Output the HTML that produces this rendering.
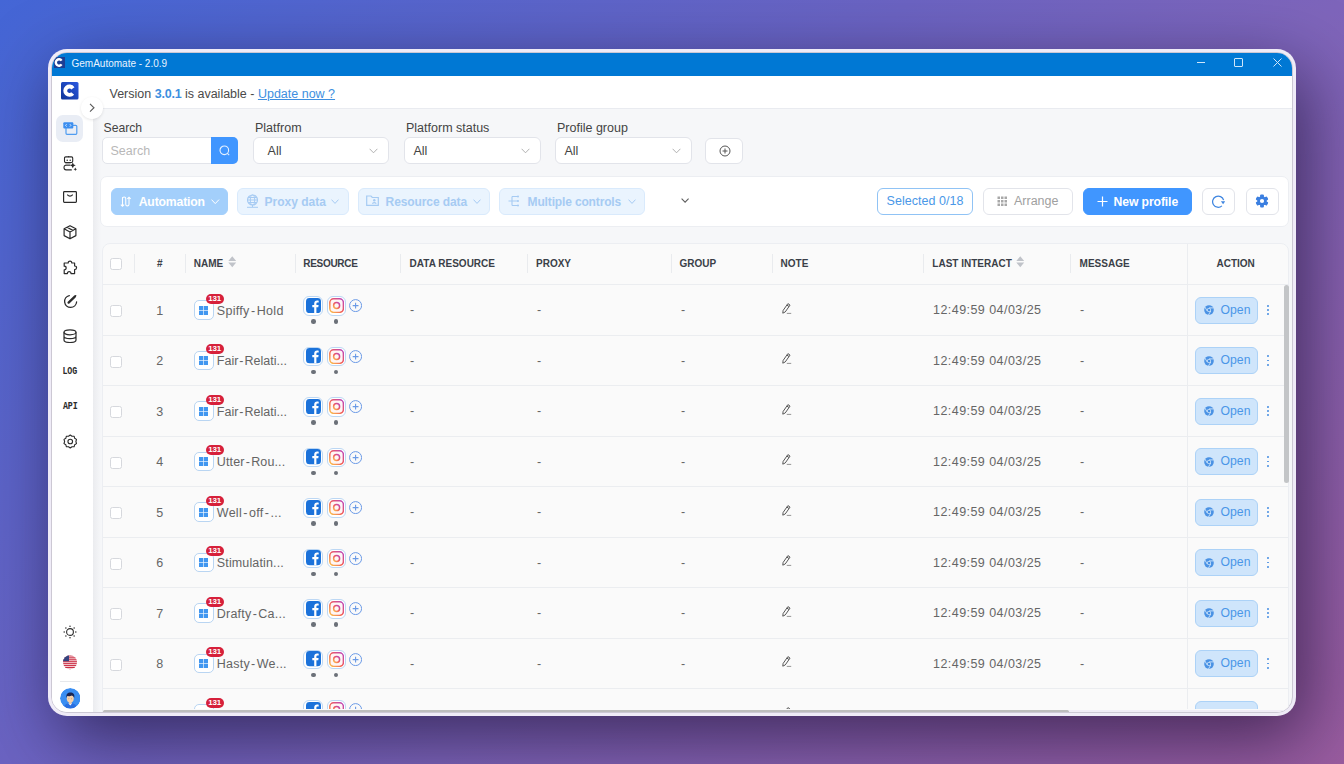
<!DOCTYPE html>
<html><head><meta charset="utf-8">
<style>
*{box-sizing:border-box;margin:0;padding:0}
html,body{width:1344px;height:764px;overflow:hidden}
body{font-family:"Liberation Sans",sans-serif;position:relative;
background:linear-gradient(140deg,#4466d6 0%,#6b63c2 40.4%,#7e65bb 59.6%,#9a5ca0 100%);}
.a{position:absolute}
.t{position:absolute;white-space:nowrap;line-height:1}
#win{position:absolute;left:48px;top:48.5px;width:1248px;height:667.5px;border-radius:19px;background:#efebf7;
box-shadow:10px 22px 70px 0 rgba(10,0,30,0.58)}
#inner{position:absolute;left:3px;top:3px;width:1242px;height:661.5px;border-radius:16px;border:1px solid #ccc8d4;overflow:hidden;background:#f6f7f9}
#pg{position:absolute;left:-52px;top:-52.5px;width:1344px;height:764px}
</style></head><body>
<div id="win"><div id="inner"><div id="pg">

<div class="a" style="left:51px;top:52px;width:1241.00px;height:23.50px;background:#0078d4"></div>
<svg class="a" style="left:54.2px;top:57.3px;" width="11" height="11" viewBox="0 0 11 11"><rect width="11" height="11" fill="#1d3e93"/><path d="M7.6 3.6 A3.2 3.2 0 1 0 7.6 7.4" fill="none" stroke="#fff" stroke-width="2.4"/></svg>
<div class="t" style="left:71.5px;top:58.63px;font-size:10px;color:#e8f3ff;font-weight:normal;">GemAutomate - 2.0.9</div>
<div class="a" style="left:1197px;top:62px;width:8.00px;height:1.00px;background:#cfe6fa"></div>
<div class="a" style="left:1234px;top:58px;width:9.00px;height:9.00px;border:1px solid #cfe6fa;border-radius:1px"></div>
<svg class="a" style="left:1273px;top:58px;" width="9" height="9" viewBox="0 0 9 9"><path d="M0.5 0.5 L8.5 8.5 M8.5 0.5 L0.5 8.5" stroke="#cfe6fa" stroke-width="1"/></svg>
<div class="a" style="left:51px;top:75.5px;width:42.00px;height:637.50px;background:#fff"></div>
<div class="a" style="left:93px;top:109px;width:8.00px;height:604.00px;background:linear-gradient(90deg,#ebecef,#f6f7f9)"></div>
<div class="a" style="left:93px;top:75.5px;width:1199.00px;height:33.50px;background:#fff;border-bottom:1px solid #e9ebf0"></div>
<div class="t" style="left:109.5px;top:87.82px;font-size:12.5px;color:#4a4a4a;font-weight:normal;">Version <span style="color:#3d8fe0;font-weight:bold;letter-spacing:-0.2px">3.0.1</span> is available - <span style="color:#3d8fe0;text-decoration:underline">Update now ?</span></div>
<div class="t" style="left:103.5px;top:121.87px;font-size:12.2px;color:#444;font-weight:normal;">Search</div>
<div class="t" style="left:255px;top:121.62px;font-size:12.5px;color:#444;font-weight:normal;">Platfrom</div>
<div class="t" style="left:406px;top:121.62px;font-size:12.5px;color:#444;font-weight:normal;">Platform status</div>
<div class="t" style="left:557px;top:121.62px;font-size:12.5px;color:#444;font-weight:normal;">Profile group</div>
<div class="a" style="left:101.5px;top:137.2px;width:136.50px;height:26.60px;background:#fff;border:1px solid #e2e4ea;border-radius:5px"></div>
<div class="a" style="left:211px;top:137.2px;width:27.00px;height:26.60px;background:#4096ff;border-radius:0 5px 5px 0"></div>
<svg class="a" style="left:218px;top:144px;" width="13" height="13" viewBox="0 0 13 13"><circle cx="6.3" cy="6.3" r="4.3" fill="none" stroke="#e6f1ff" stroke-width="1.1"/><path d="M9.4 9.4 L11.2 11.2" stroke="#e6f1ff" stroke-width="1.1"/></svg>
<div class="t" style="left:110.5px;top:144.72px;font-size:12.5px;color:#b8b8b8;font-weight:normal;">Search</div>
<div class="a" style="left:252.7px;top:137.2px;width:136.60px;height:26.60px;background:#fff;border:1px solid #e2e4ea;border-radius:6px"></div>
<div class="t" style="left:267.6px;top:144.72px;font-size:12.5px;color:#444;font-weight:normal;">All</div>
<svg class="a" style="left:369.3px;top:148px;" width="9" height="6" viewBox="0 0 9 6"><path d="M0.6 0.8 L4.5 4.8 L8.4 0.8" fill="none" stroke="#a8a8a8" stroke-width="0.9"/></svg>
<div class="a" style="left:403.8px;top:137.2px;width:136.90px;height:26.60px;background:#fff;border:1px solid #e2e4ea;border-radius:6px"></div>
<div class="t" style="left:413.4px;top:144.72px;font-size:12.5px;color:#444;font-weight:normal;">All</div>
<svg class="a" style="left:520.7px;top:148px;" width="9" height="6" viewBox="0 0 9 6"><path d="M0.6 0.8 L4.5 4.8 L8.4 0.8" fill="none" stroke="#a8a8a8" stroke-width="0.9"/></svg>
<div class="a" style="left:554.5px;top:137.2px;width:137.10px;height:26.60px;background:#fff;border:1px solid #e2e4ea;border-radius:6px"></div>
<div class="t" style="left:564.4px;top:144.72px;font-size:12.5px;color:#444;font-weight:normal;">All</div>
<svg class="a" style="left:671.6px;top:148px;" width="9" height="6" viewBox="0 0 9 6"><path d="M0.6 0.8 L4.5 4.8 L8.4 0.8" fill="none" stroke="#a8a8a8" stroke-width="0.9"/></svg>
<div class="a" style="left:705.4px;top:137.5px;width:38.00px;height:26.20px;background:#fff;border:1px solid #e2e4ea;border-radius:6px"></div>
<svg class="a" style="left:718.5px;top:145px;" width="12" height="12" viewBox="0 0 12 12"><circle cx="6" cy="6" r="5" fill="none" stroke="#555" stroke-width="1"/><path d="M6 3.5 V8.5 M3.5 6 H8.5" stroke="#555" stroke-width="1"/></svg>
<div class="a" style="left:100.4px;top:175.5px;width:1188.40px;height:51.40px;background:#fff;border:1px solid #eceef2;border-radius:7px"></div>
<div class="a" style="left:111px;top:187.8px;width:117.00px;height:26.90px;background:#a3cffb;border:1px solid #a3cffb;border-radius:6px;"></div>
<svg class="a" style="left:120px;top:195.8px" width="11.5" height="11" viewBox="0 0 13 13.5"><path d="M2.5 1.5 V12.5 M0.5 10.5 L2.5 12.5 L4.5 10.5" fill="none" stroke="#fff" stroke-width="1.3"/><path d="M2.5 3 C2.5 0.5 6.5 0.5 6.5 3 V10 C6.5 12.8 10.5 12.8 10.5 10 V1.5 M8.5 3.5 L10.5 1.5 L12.5 3.5" fill="none" stroke="#fff" stroke-width="1.3"/></svg>
<div class="t" style="left:138.7px;top:195.57px;font-size:12.2px;color:#fff;font-weight:bold;letter-spacing:-0.15px">Automation</div>
<svg class="a" style="left:211px;top:199px;" width="8.5" height="5.5" viewBox="0 0 8.5 5.5"><path d="M0.5 0.6 L4.25 4.6 L8 0.6" fill="none" stroke="#fff" stroke-width="1"/></svg>
<div class="a" style="left:237px;top:187.8px;width:111.50px;height:26.90px;background:#eaf4fe;border:1px solid #d9eafc;border-radius:6px;"></div>
<svg class="a" style="left:245.5px;top:194px;" width="13" height="14" viewBox="0 0 13 14"><circle cx="6.5" cy="6" r="5" fill="none" stroke="#a6cbf3" stroke-width="1.2"/><ellipse cx="6.5" cy="6" rx="2.2" ry="5" fill="none" stroke="#a6cbf3" stroke-width="1"/><path d="M1.5 6 H11.5 M2.3 3.5 H10.7 M2.3 8.5 H10.7 M6.5 11 V13 M1 13.3 H12" fill="none" stroke="#a6cbf3" stroke-width="1"/></svg>
<div class="t" style="left:264.5px;top:195.74px;font-size:12px;color:#a6cbf3;font-weight:bold;">Proxy data</div>
<svg class="a" style="left:331.4px;top:199px;" width="8" height="5.5" viewBox="0 0 8 5.5"><path d="M0.5 0.6 L4 4.4 L7.5 0.6" fill="none" stroke="#a6cbf3" stroke-width="1"/></svg>
<div class="a" style="left:357.5px;top:187.8px;width:132.50px;height:26.90px;background:#eaf4fe;border:1px solid #d9eafc;border-radius:6px;"></div>
<svg class="a" style="left:366px;top:195px;" width="13" height="11" viewBox="0 0 13 11"><path d="M0.7 1 H5 L6.3 2.5 H12.3 V10.3 H0.7 Z" fill="none" stroke="#a6cbf3" stroke-width="1.2"/><circle cx="8.3" cy="5.3" r="1.2" fill="#a6cbf3"/><path d="M6.3 8.6 Q8.3 6.6 10.3 8.6" fill="none" stroke="#a6cbf3" stroke-width="1.1"/></svg>
<div class="t" style="left:385.6px;top:195.74px;font-size:12px;color:#a6cbf3;font-weight:bold;letter-spacing:-0.1px">Resource data</div>
<svg class="a" style="left:473.4px;top:199px;" width="8" height="5.5" viewBox="0 0 8 5.5"><path d="M0.5 0.6 L4 4.4 L7.5 0.6" fill="none" stroke="#a6cbf3" stroke-width="1"/></svg>
<div class="a" style="left:499px;top:187.8px;width:145.80px;height:26.90px;background:#eaf4fe;border:1px solid #d9eafc;border-radius:6px;"></div>
<svg class="a" style="left:508px;top:195px;" width="11" height="12" viewBox="0 0 11 12"><path d="M0.5 6 H4 M4 1.5 H10 M4 6 H10 M4 10.5 H10 M4 1.5 V10.5" fill="none" stroke="#a6cbf3" stroke-width="1.1"/><circle cx="10" cy="1.5" r="1" fill="#a6cbf3"/><circle cx="10" cy="6" r="1" fill="#a6cbf3"/><circle cx="10" cy="10.5" r="1" fill="#a6cbf3"/></svg>
<div class="t" style="left:527.6px;top:195.74px;font-size:12px;color:#a6cbf3;font-weight:bold;letter-spacing:-0.15px">Multiple controls</div>
<svg class="a" style="left:627.6px;top:199px;" width="8" height="5.5" viewBox="0 0 8 5.5"><path d="M0.5 0.6 L4 4.4 L7.5 0.6" fill="none" stroke="#a6cbf3" stroke-width="1"/></svg>
<svg class="a" style="left:680.8px;top:198.2px;" width="8.2" height="5" viewBox="0 0 8.2 5"><path d="M0.6 0.6 L4.1 4.2 L7.6 0.6" fill="none" stroke="#5c5c5c" stroke-width="1.05"/></svg>
<div class="a" style="left:877px;top:187.8px;width:96.00px;height:26.90px;background:#fff;border:1px solid #90c3f5;border-radius:6px;"></div>
<div class="t" style="left:886.5px;top:195.32px;font-size:12.5px;color:#4a98e8;font-weight:normal;letter-spacing:0.05px">Selected 0/18</div>
<div class="a" style="left:983.4px;top:187.8px;width:89.40px;height:26.90px;background:#fff;border:1px solid #e2e4ea;border-radius:6px;"></div>
<svg class="a" style="left:997px;top:195.5px;" width="11" height="11" viewBox="0 0 11 11"><rect x="0.5" y="0.5" width="2.5" height="2.5" fill="#a8a8a8"/><rect x="0.5" y="4.0" width="2.5" height="2.5" fill="#a8a8a8"/><rect x="0.5" y="7.5" width="2.5" height="2.5" fill="#a8a8a8"/><rect x="4.0" y="0.5" width="2.5" height="2.5" fill="#a8a8a8"/><rect x="4.0" y="4.0" width="2.5" height="2.5" fill="#a8a8a8"/><rect x="4.0" y="7.5" width="2.5" height="2.5" fill="#a8a8a8"/><rect x="7.5" y="0.5" width="2.5" height="2.5" fill="#a8a8a8"/><rect x="7.5" y="4.0" width="2.5" height="2.5" fill="#a8a8a8"/><rect x="7.5" y="7.5" width="2.5" height="2.5" fill="#a8a8a8"/></svg>
<div class="t" style="left:1014px;top:195.32px;font-size:12.5px;color:#a0a0a0;font-weight:normal;">Arrange</div>
<div class="a" style="left:1083px;top:187.8px;width:108.60px;height:26.90px;background:#4096ff;border:1px solid #4096ff;border-radius:6px;"></div>
<svg class="a" style="left:1097px;top:195.5px;" width="11" height="11" viewBox="0 0 11 11"><path d="M5.5 0.5 V10.5 M0.5 5.5 H10.5" stroke="#fff" stroke-width="1.2"/></svg>
<div class="t" style="left:1113.5px;top:195.57px;font-size:12.2px;color:#fff;font-weight:bold;letter-spacing:-0.1px">New profile</div>
<div class="a" style="left:1202px;top:187.8px;width:33.40px;height:26.90px;background:#fff;border:1px solid #e2e4ea;border-radius:6px;"></div>
<svg class="a" style="left:1211px;top:194.5px;" width="15" height="14" viewBox="0 0 15 14"><path d="M10.9 10.9 A5.6 5.6 0 1 1 12.6 5.2" fill="none" stroke="#3f86e0" stroke-width="1.25"/><path d="M9.9 6.2 L14.2 6.2 L12.1 9.3 Z" fill="#3f86e0"/></svg>
<div class="a" style="left:1245.6px;top:187.8px;width:33.40px;height:26.90px;background:#fff;border:1px solid #e2e4ea;border-radius:6px;"></div>
<svg class="a" style="left:1255.4px;top:194.3px;" width="14" height="14" viewBox="0 0 14 14"><g fill="#3b7fe0"><circle cx="7" cy="7" r="4.7"/><rect x="5.1" y="0.6" width="3.8" height="3.6" rx="1" transform="rotate(0 7 7)"/><rect x="5.1" y="0.6" width="3.8" height="3.6" rx="1" transform="rotate(60 7 7)"/><rect x="5.1" y="0.6" width="3.8" height="3.6" rx="1" transform="rotate(120 7 7)"/><rect x="5.1" y="0.6" width="3.8" height="3.6" rx="1" transform="rotate(180 7 7)"/><rect x="5.1" y="0.6" width="3.8" height="3.6" rx="1" transform="rotate(240 7 7)"/><rect x="5.1" y="0.6" width="3.8" height="3.6" rx="1" transform="rotate(300 7 7)"/></g><circle cx="7" cy="7" r="2.1" fill="#fff"/></svg>
<div class="a" style="left:101.7px;top:243.4px;width:1187.30px;height:496.60px;background:#fafafa;border:1px solid #eceef2;border-radius:8px 8px 0 0"></div>
<div class="a" style="left:102.7px;top:284.0px;width:1185.30px;height:1.00px;background:#ebedf0"></div>
<div class="a" style="left:134.3px;top:254px;width:1.00px;height:19.00px;background:#e9ebee"></div>
<div class="a" style="left:184.5px;top:254px;width:1.00px;height:19.00px;background:#e9ebee"></div>
<div class="a" style="left:294.6px;top:254px;width:1.00px;height:19.00px;background:#e9ebee"></div>
<div class="a" style="left:400.4px;top:254px;width:1.00px;height:19.00px;background:#e9ebee"></div>
<div class="a" style="left:526.9px;top:254px;width:1.00px;height:19.00px;background:#e9ebee"></div>
<div class="a" style="left:670.6px;top:254px;width:1.00px;height:19.00px;background:#e9ebee"></div>
<div class="a" style="left:771.7px;top:254px;width:1.00px;height:19.00px;background:#e9ebee"></div>
<div class="a" style="left:923.3px;top:254px;width:1.00px;height:19.00px;background:#e9ebee"></div>
<div class="a" style="left:1070.4px;top:254px;width:1.00px;height:19.00px;background:#e9ebee"></div>
<div class="a" style="left:1187px;top:244.4px;width:1.00px;height:465.10px;background:#ebedf0"></div>
<div class="a" style="left:110px;top:258px;width:12.00px;height:12.00px;background:#fff;border:1px solid #d6d8dd;border-radius:2.5px"></div>
<div class="t" style="left:157px;top:259.14px;font-size:10px;color:#3a3f48;font-weight:bold;">#</div>
<div class="t" style="left:193.8px;top:259.14px;font-size:10px;color:#3a3f48;font-weight:bold;">NAME</div>
<svg class="a" style="left:228px;top:256px;" width="8.5" height="11.5" viewBox="0 0 8.5 11.5"><path d="M0.3 4.9 L4.25 0.3 L8.2 4.9 Z M0.3 6.6 L4.25 11.2 L8.2 6.6 Z" fill="#c0c3c9"/></svg>
<div class="t" style="left:303.3px;top:259.14px;font-size:10px;color:#3a3f48;font-weight:bold;letter-spacing:-0.3px">RESOURCE</div>
<div class="t" style="left:409.6px;top:259.14px;font-size:10px;color:#3a3f48;font-weight:bold;">DATA RESOURCE</div>
<div class="t" style="left:536px;top:259.14px;font-size:10px;color:#3a3f48;font-weight:bold;">PROXY</div>
<div class="t" style="left:679.6px;top:259.14px;font-size:10px;color:#3a3f48;font-weight:bold;">GROUP</div>
<div class="t" style="left:780.6px;top:259.14px;font-size:10px;color:#3a3f48;font-weight:bold;">NOTE</div>
<div class="t" style="left:932.3px;top:258.54px;font-size:10px;color:#3a3f48;font-weight:bold;">LAST INTERACT</div>
<svg class="a" style="left:1016px;top:256px;" width="8.5" height="11.5" viewBox="0 0 8.5 11.5"><path d="M0.3 4.9 L4.25 0.3 L8.2 4.9 Z M0.3 6.6 L4.25 11.2 L8.2 6.6 Z" fill="#c0c3c9"/></svg>
<div class="t" style="left:1079.6px;top:259.04px;font-size:10px;color:#3a3f48;font-weight:bold;">MESSAGE</div>
<div class="t" style="left:1216.5px;top:259.04px;font-size:10px;color:#3a3f48;font-weight:bold;">ACTION</div>
<div class="a" style="left:0;top:0;width:1344px;height:709px;overflow:hidden">
<div class="a" style="left:102.7px;top:334.5px;width:1185.30px;height:1.00px;background:#ebedf0"></div>
<div class="a" style="left:110px;top:305.1px;width:12.00px;height:12.00px;background:#fff;border:1px solid #d6d8dd;border-radius:2.5px"></div>
<div class="t" style="left:-40.19999999999999px;width:400px;text-align:center;top:304.72px;font-size:12.5px;color:#666;font-weight:normal;">1</div>
<div class="a" style="left:194px;top:300.2px;width:19.60px;height:19.50px;background:#fff;border:1px solid #b9d5f2;border-radius:5px"></div>
<svg class="a" style="left:199.2px;top:305.8px;" width="9" height="9" viewBox="0 0 9 9"><g fill="#4197f0"><rect x="0" y="0" width="4.2" height="4.2"/><rect x="4.8" y="0" width="4.2" height="4.2"/><rect x="0" y="4.8" width="4.2" height="4.2"/><rect x="4.8" y="4.8" width="4.2" height="4.2"/></g></svg>
<div class="a" style="left:205.6px;top:293.9px;width:18.20px;height:10.00px;background:#d6203a;border-radius:5px"></div>
<div class="t" style="left:14.699999999999989px;width:400px;text-align:center;top:294.93px;font-size:8px;color:#fff;font-weight:bold;letter-spacing:-0.2px">131</div>
<div class="t" style="left:216.8px;top:304.72px;font-size:12.5px;color:#646464;font-weight:normal;letter-spacing:0.3px">Spiffy&#8202;-&#8202;Hold</div>
<div class="a" style="left:303.4px;top:296.2px;width:19.20px;height:19.40px;background:#fff;border:1.2px solid #bcd7f4;border-radius:6px"></div>
<svg class="a" style="left:306px;top:297.9px;" width="15" height="15.2" viewBox="0 0 15 15.2"><rect width="15" height="15.2" rx="3.5" fill="#1b72da"/><path d="M10.4 15.2 V9.3 H12.3 L12.6 7.1 H10.4 V5.8 C10.4 5.1 10.7 4.6 11.7 4.6 H12.7 V2.7 C12.4 2.65 11.8 2.6 11.1 2.6 C9.4 2.6 8.2 3.6 8.2 5.5 V7.1 H6.3 V9.3 H8.2 V15.2 Z" fill="#fff"/></svg>
<div class="a" style="left:326.5px;top:296.2px;width:19.40px;height:19.40px;background:#fff;border:1.2px solid #bcd7f4;border-radius:6px"></div>
<svg class="a" style="left:328.6px;top:298.0px;" width="15.2" height="15.2" viewBox="0 0 15.2 15.2"><defs><linearGradient id="ig0" x1="0" y1="1" x2="1" y2="0"><stop offset="0" stop-color="#fbc64e"/><stop offset="0.5" stop-color="#f05a5a"/><stop offset="1" stop-color="#b845c0"/></linearGradient></defs><rect x="0.8" y="0.8" width="13.6" height="13.6" rx="3.8" fill="#fff6f6" stroke="url(#ig0)" stroke-width="1.5"/><circle cx="7.6" cy="7.6" r="3" fill="none" stroke="url(#ig0)" stroke-width="1.5"/></svg>
<svg class="a" style="left:349px;top:299.1px;" width="13.2" height="13.2" viewBox="0 0 13.2 13.2"><circle cx="6.6" cy="6.6" r="6" fill="none" stroke="#6a9ae6" stroke-width="1"/><path d="M6.6 3.7 V9.5 M3.7 6.6 H9.5" stroke="#6a9ae6" stroke-width="1.1"/></svg>
<div class="a" style="left:311.1px;top:319.4px;width:4.60px;height:4.60px;background:#6b7078;border-radius:50%"></div>
<div class="a" style="left:333.8px;top:319.4px;width:4.60px;height:4.60px;background:#6b7078;border-radius:50%"></div>
<div class="t" style="left:410px;top:304.42px;font-size:12.5px;color:#666;font-weight:normal;">-</div>
<div class="t" style="left:537px;top:304.42px;font-size:12.5px;color:#666;font-weight:normal;">-</div>
<div class="t" style="left:681px;top:304.42px;font-size:12.5px;color:#666;font-weight:normal;">-</div>
<div class="t" style="left:1080px;top:304.42px;font-size:12.5px;color:#666;font-weight:normal;">-</div>
<svg class="a" style="left:781px;top:302.5px;" width="11" height="12" viewBox="0 0 11 12"><g transform="translate(5 5.6) rotate(35)" fill="none" stroke="#555" stroke-width="0.9" stroke-linejoin="round"><path d="M-1.3 -5.2 H1.3 V3.2 L0 5.6 L-1.3 3.2 Z M-1.3 -3.4 H1.3"/></g><path d="M5.8 10.4 H10.2" stroke="#8a8a8a" stroke-width="0.9"/></svg>
<div class="t" style="left:933px;top:304.22px;font-size:12.5px;color:#666;font-weight:normal;letter-spacing:0.45px">12:49:59 04/03/25</div>
<div class="a" style="left:1195.2px;top:296.5px;width:62.60px;height:27.00px;background:#cfe5fb;border:1px solid #acd2f7;border-radius:6px"></div>
<svg class="a" style="left:1203.6px;top:305.1px;" width="10" height="10" viewBox="0 0 10 10"><circle cx="5" cy="5" r="4.8" fill="#4a92e4"/><circle cx="5" cy="5" r="2.1" fill="#cfe5fb"/><circle cx="5" cy="5" r="1.3" fill="#4a92e4"/><path d="M5 2.9 H9.6 M3.2 6 L0.9 2 M6.8 6 L4.5 9.8" stroke="#cfe5fb" stroke-width="0.9"/></svg>
<div class="t" style="left:1220.6px;top:303.77px;font-size:12.2px;color:#4a96e8;font-weight:normal;">Open</div>
<div class="a" style="left:1267.2px;top:304.90000000000003px;width:1.80px;height:1.80px;background:#4a90e2;border-radius:50%"></div>
<div class="a" style="left:1267.2px;top:309.1px;width:1.80px;height:1.80px;background:#4a90e2;border-radius:50%"></div>
<div class="a" style="left:1267.2px;top:313.40000000000003px;width:1.80px;height:1.80px;background:#4a90e2;border-radius:50%"></div>
<div class="a" style="left:102.7px;top:385.0px;width:1185.30px;height:1.00px;background:#ebedf0"></div>
<div class="a" style="left:110px;top:355.6px;width:12.00px;height:12.00px;background:#fff;border:1px solid #d6d8dd;border-radius:2.5px"></div>
<div class="t" style="left:-40.19999999999999px;width:400px;text-align:center;top:355.22px;font-size:12.5px;color:#666;font-weight:normal;">2</div>
<div class="a" style="left:194px;top:350.7px;width:19.60px;height:19.50px;background:#fff;border:1px solid #b9d5f2;border-radius:5px"></div>
<svg class="a" style="left:199.2px;top:356.3px;" width="9" height="9" viewBox="0 0 9 9"><g fill="#4197f0"><rect x="0" y="0" width="4.2" height="4.2"/><rect x="4.8" y="0" width="4.2" height="4.2"/><rect x="0" y="4.8" width="4.2" height="4.2"/><rect x="4.8" y="4.8" width="4.2" height="4.2"/></g></svg>
<div class="a" style="left:205.6px;top:344.4px;width:18.20px;height:10.00px;background:#d6203a;border-radius:5px"></div>
<div class="t" style="left:14.699999999999989px;width:400px;text-align:center;top:345.43px;font-size:8px;color:#fff;font-weight:bold;letter-spacing:-0.2px">131</div>
<div class="t" style="left:216.8px;top:355.22px;font-size:12.5px;color:#646464;font-weight:normal;letter-spacing:0.0px">Fair&#8202;-&#8202;Relati...</div>
<div class="a" style="left:303.4px;top:346.7px;width:19.20px;height:19.40px;background:#fff;border:1.2px solid #bcd7f4;border-radius:6px"></div>
<svg class="a" style="left:306px;top:348.4px;" width="15" height="15.2" viewBox="0 0 15 15.2"><rect width="15" height="15.2" rx="3.5" fill="#1b72da"/><path d="M10.4 15.2 V9.3 H12.3 L12.6 7.1 H10.4 V5.8 C10.4 5.1 10.7 4.6 11.7 4.6 H12.7 V2.7 C12.4 2.65 11.8 2.6 11.1 2.6 C9.4 2.6 8.2 3.6 8.2 5.5 V7.1 H6.3 V9.3 H8.2 V15.2 Z" fill="#fff"/></svg>
<div class="a" style="left:326.5px;top:346.7px;width:19.40px;height:19.40px;background:#fff;border:1.2px solid #bcd7f4;border-radius:6px"></div>
<svg class="a" style="left:328.6px;top:348.5px;" width="15.2" height="15.2" viewBox="0 0 15.2 15.2"><defs><linearGradient id="ig1" x1="0" y1="1" x2="1" y2="0"><stop offset="0" stop-color="#fbc64e"/><stop offset="0.5" stop-color="#f05a5a"/><stop offset="1" stop-color="#b845c0"/></linearGradient></defs><rect x="0.8" y="0.8" width="13.6" height="13.6" rx="3.8" fill="#fff6f6" stroke="url(#ig1)" stroke-width="1.5"/><circle cx="7.6" cy="7.6" r="3" fill="none" stroke="url(#ig1)" stroke-width="1.5"/></svg>
<svg class="a" style="left:349px;top:349.6px;" width="13.2" height="13.2" viewBox="0 0 13.2 13.2"><circle cx="6.6" cy="6.6" r="6" fill="none" stroke="#6a9ae6" stroke-width="1"/><path d="M6.6 3.7 V9.5 M3.7 6.6 H9.5" stroke="#6a9ae6" stroke-width="1.1"/></svg>
<div class="a" style="left:311.1px;top:369.9px;width:4.60px;height:4.60px;background:#6b7078;border-radius:50%"></div>
<div class="a" style="left:333.8px;top:369.9px;width:4.60px;height:4.60px;background:#6b7078;border-radius:50%"></div>
<div class="t" style="left:410px;top:354.92px;font-size:12.5px;color:#666;font-weight:normal;">-</div>
<div class="t" style="left:537px;top:354.92px;font-size:12.5px;color:#666;font-weight:normal;">-</div>
<div class="t" style="left:681px;top:354.92px;font-size:12.5px;color:#666;font-weight:normal;">-</div>
<div class="t" style="left:1080px;top:354.92px;font-size:12.5px;color:#666;font-weight:normal;">-</div>
<svg class="a" style="left:781px;top:353.0px;" width="11" height="12" viewBox="0 0 11 12"><g transform="translate(5 5.6) rotate(35)" fill="none" stroke="#555" stroke-width="0.9" stroke-linejoin="round"><path d="M-1.3 -5.2 H1.3 V3.2 L0 5.6 L-1.3 3.2 Z M-1.3 -3.4 H1.3"/></g><path d="M5.8 10.4 H10.2" stroke="#8a8a8a" stroke-width="0.9"/></svg>
<div class="t" style="left:933px;top:354.72px;font-size:12.5px;color:#666;font-weight:normal;letter-spacing:0.45px">12:49:59 04/03/25</div>
<div class="a" style="left:1195.2px;top:347.0px;width:62.60px;height:27.00px;background:#cfe5fb;border:1px solid #acd2f7;border-radius:6px"></div>
<svg class="a" style="left:1203.6px;top:355.6px;" width="10" height="10" viewBox="0 0 10 10"><circle cx="5" cy="5" r="4.8" fill="#4a92e4"/><circle cx="5" cy="5" r="2.1" fill="#cfe5fb"/><circle cx="5" cy="5" r="1.3" fill="#4a92e4"/><path d="M5 2.9 H9.6 M3.2 6 L0.9 2 M6.8 6 L4.5 9.8" stroke="#cfe5fb" stroke-width="0.9"/></svg>
<div class="t" style="left:1220.6px;top:354.27px;font-size:12.2px;color:#4a96e8;font-weight:normal;">Open</div>
<div class="a" style="left:1267.2px;top:355.40000000000003px;width:1.80px;height:1.80px;background:#4a90e2;border-radius:50%"></div>
<div class="a" style="left:1267.2px;top:359.6px;width:1.80px;height:1.80px;background:#4a90e2;border-radius:50%"></div>
<div class="a" style="left:1267.2px;top:363.90000000000003px;width:1.80px;height:1.80px;background:#4a90e2;border-radius:50%"></div>
<div class="a" style="left:102.7px;top:435.5px;width:1185.30px;height:1.00px;background:#ebedf0"></div>
<div class="a" style="left:110px;top:406.1px;width:12.00px;height:12.00px;background:#fff;border:1px solid #d6d8dd;border-radius:2.5px"></div>
<div class="t" style="left:-40.19999999999999px;width:400px;text-align:center;top:405.72px;font-size:12.5px;color:#666;font-weight:normal;">3</div>
<div class="a" style="left:194px;top:401.2px;width:19.60px;height:19.50px;background:#fff;border:1px solid #b9d5f2;border-radius:5px"></div>
<svg class="a" style="left:199.2px;top:406.8px;" width="9" height="9" viewBox="0 0 9 9"><g fill="#4197f0"><rect x="0" y="0" width="4.2" height="4.2"/><rect x="4.8" y="0" width="4.2" height="4.2"/><rect x="0" y="4.8" width="4.2" height="4.2"/><rect x="4.8" y="4.8" width="4.2" height="4.2"/></g></svg>
<div class="a" style="left:205.6px;top:394.9px;width:18.20px;height:10.00px;background:#d6203a;border-radius:5px"></div>
<div class="t" style="left:14.699999999999989px;width:400px;text-align:center;top:395.93px;font-size:8px;color:#fff;font-weight:bold;letter-spacing:-0.2px">131</div>
<div class="t" style="left:216.8px;top:405.72px;font-size:12.5px;color:#646464;font-weight:normal;letter-spacing:0.0px">Fair&#8202;-&#8202;Relati...</div>
<div class="a" style="left:303.4px;top:397.2px;width:19.20px;height:19.40px;background:#fff;border:1.2px solid #bcd7f4;border-radius:6px"></div>
<svg class="a" style="left:306px;top:398.9px;" width="15" height="15.2" viewBox="0 0 15 15.2"><rect width="15" height="15.2" rx="3.5" fill="#1b72da"/><path d="M10.4 15.2 V9.3 H12.3 L12.6 7.1 H10.4 V5.8 C10.4 5.1 10.7 4.6 11.7 4.6 H12.7 V2.7 C12.4 2.65 11.8 2.6 11.1 2.6 C9.4 2.6 8.2 3.6 8.2 5.5 V7.1 H6.3 V9.3 H8.2 V15.2 Z" fill="#fff"/></svg>
<div class="a" style="left:326.5px;top:397.2px;width:19.40px;height:19.40px;background:#fff;border:1.2px solid #bcd7f4;border-radius:6px"></div>
<svg class="a" style="left:328.6px;top:399.0px;" width="15.2" height="15.2" viewBox="0 0 15.2 15.2"><defs><linearGradient id="ig2" x1="0" y1="1" x2="1" y2="0"><stop offset="0" stop-color="#fbc64e"/><stop offset="0.5" stop-color="#f05a5a"/><stop offset="1" stop-color="#b845c0"/></linearGradient></defs><rect x="0.8" y="0.8" width="13.6" height="13.6" rx="3.8" fill="#fff6f6" stroke="url(#ig2)" stroke-width="1.5"/><circle cx="7.6" cy="7.6" r="3" fill="none" stroke="url(#ig2)" stroke-width="1.5"/></svg>
<svg class="a" style="left:349px;top:400.1px;" width="13.2" height="13.2" viewBox="0 0 13.2 13.2"><circle cx="6.6" cy="6.6" r="6" fill="none" stroke="#6a9ae6" stroke-width="1"/><path d="M6.6 3.7 V9.5 M3.7 6.6 H9.5" stroke="#6a9ae6" stroke-width="1.1"/></svg>
<div class="a" style="left:311.1px;top:420.4px;width:4.60px;height:4.60px;background:#6b7078;border-radius:50%"></div>
<div class="a" style="left:333.8px;top:420.4px;width:4.60px;height:4.60px;background:#6b7078;border-radius:50%"></div>
<div class="t" style="left:410px;top:405.42px;font-size:12.5px;color:#666;font-weight:normal;">-</div>
<div class="t" style="left:537px;top:405.42px;font-size:12.5px;color:#666;font-weight:normal;">-</div>
<div class="t" style="left:681px;top:405.42px;font-size:12.5px;color:#666;font-weight:normal;">-</div>
<div class="t" style="left:1080px;top:405.42px;font-size:12.5px;color:#666;font-weight:normal;">-</div>
<svg class="a" style="left:781px;top:403.5px;" width="11" height="12" viewBox="0 0 11 12"><g transform="translate(5 5.6) rotate(35)" fill="none" stroke="#555" stroke-width="0.9" stroke-linejoin="round"><path d="M-1.3 -5.2 H1.3 V3.2 L0 5.6 L-1.3 3.2 Z M-1.3 -3.4 H1.3"/></g><path d="M5.8 10.4 H10.2" stroke="#8a8a8a" stroke-width="0.9"/></svg>
<div class="t" style="left:933px;top:405.22px;font-size:12.5px;color:#666;font-weight:normal;letter-spacing:0.45px">12:49:59 04/03/25</div>
<div class="a" style="left:1195.2px;top:397.5px;width:62.60px;height:27.00px;background:#cfe5fb;border:1px solid #acd2f7;border-radius:6px"></div>
<svg class="a" style="left:1203.6px;top:406.1px;" width="10" height="10" viewBox="0 0 10 10"><circle cx="5" cy="5" r="4.8" fill="#4a92e4"/><circle cx="5" cy="5" r="2.1" fill="#cfe5fb"/><circle cx="5" cy="5" r="1.3" fill="#4a92e4"/><path d="M5 2.9 H9.6 M3.2 6 L0.9 2 M6.8 6 L4.5 9.8" stroke="#cfe5fb" stroke-width="0.9"/></svg>
<div class="t" style="left:1220.6px;top:404.77px;font-size:12.2px;color:#4a96e8;font-weight:normal;">Open</div>
<div class="a" style="left:1267.2px;top:405.90000000000003px;width:1.80px;height:1.80px;background:#4a90e2;border-radius:50%"></div>
<div class="a" style="left:1267.2px;top:410.1px;width:1.80px;height:1.80px;background:#4a90e2;border-radius:50%"></div>
<div class="a" style="left:1267.2px;top:414.40000000000003px;width:1.80px;height:1.80px;background:#4a90e2;border-radius:50%"></div>
<div class="a" style="left:102.7px;top:486.0px;width:1185.30px;height:1.00px;background:#ebedf0"></div>
<div class="a" style="left:110px;top:456.6px;width:12.00px;height:12.00px;background:#fff;border:1px solid #d6d8dd;border-radius:2.5px"></div>
<div class="t" style="left:-40.19999999999999px;width:400px;text-align:center;top:456.22px;font-size:12.5px;color:#666;font-weight:normal;">4</div>
<div class="a" style="left:194px;top:451.7px;width:19.60px;height:19.50px;background:#fff;border:1px solid #b9d5f2;border-radius:5px"></div>
<svg class="a" style="left:199.2px;top:457.3px;" width="9" height="9" viewBox="0 0 9 9"><g fill="#4197f0"><rect x="0" y="0" width="4.2" height="4.2"/><rect x="4.8" y="0" width="4.2" height="4.2"/><rect x="0" y="4.8" width="4.2" height="4.2"/><rect x="4.8" y="4.8" width="4.2" height="4.2"/></g></svg>
<div class="a" style="left:205.6px;top:445.4px;width:18.20px;height:10.00px;background:#d6203a;border-radius:5px"></div>
<div class="t" style="left:14.699999999999989px;width:400px;text-align:center;top:446.43px;font-size:8px;color:#fff;font-weight:bold;letter-spacing:-0.2px">131</div>
<div class="t" style="left:216.8px;top:456.22px;font-size:12.5px;color:#646464;font-weight:normal;letter-spacing:0.13px">Utter&#8202;-&#8202;Rou...</div>
<div class="a" style="left:303.4px;top:447.7px;width:19.20px;height:19.40px;background:#fff;border:1.2px solid #bcd7f4;border-radius:6px"></div>
<svg class="a" style="left:306px;top:449.4px;" width="15" height="15.2" viewBox="0 0 15 15.2"><rect width="15" height="15.2" rx="3.5" fill="#1b72da"/><path d="M10.4 15.2 V9.3 H12.3 L12.6 7.1 H10.4 V5.8 C10.4 5.1 10.7 4.6 11.7 4.6 H12.7 V2.7 C12.4 2.65 11.8 2.6 11.1 2.6 C9.4 2.6 8.2 3.6 8.2 5.5 V7.1 H6.3 V9.3 H8.2 V15.2 Z" fill="#fff"/></svg>
<div class="a" style="left:326.5px;top:447.7px;width:19.40px;height:19.40px;background:#fff;border:1.2px solid #bcd7f4;border-radius:6px"></div>
<svg class="a" style="left:328.6px;top:449.5px;" width="15.2" height="15.2" viewBox="0 0 15.2 15.2"><defs><linearGradient id="ig3" x1="0" y1="1" x2="1" y2="0"><stop offset="0" stop-color="#fbc64e"/><stop offset="0.5" stop-color="#f05a5a"/><stop offset="1" stop-color="#b845c0"/></linearGradient></defs><rect x="0.8" y="0.8" width="13.6" height="13.6" rx="3.8" fill="#fff6f6" stroke="url(#ig3)" stroke-width="1.5"/><circle cx="7.6" cy="7.6" r="3" fill="none" stroke="url(#ig3)" stroke-width="1.5"/></svg>
<svg class="a" style="left:349px;top:450.6px;" width="13.2" height="13.2" viewBox="0 0 13.2 13.2"><circle cx="6.6" cy="6.6" r="6" fill="none" stroke="#6a9ae6" stroke-width="1"/><path d="M6.6 3.7 V9.5 M3.7 6.6 H9.5" stroke="#6a9ae6" stroke-width="1.1"/></svg>
<div class="a" style="left:311.1px;top:470.9px;width:4.60px;height:4.60px;background:#6b7078;border-radius:50%"></div>
<div class="a" style="left:333.8px;top:470.9px;width:4.60px;height:4.60px;background:#6b7078;border-radius:50%"></div>
<div class="t" style="left:410px;top:455.92px;font-size:12.5px;color:#666;font-weight:normal;">-</div>
<div class="t" style="left:537px;top:455.92px;font-size:12.5px;color:#666;font-weight:normal;">-</div>
<div class="t" style="left:681px;top:455.92px;font-size:12.5px;color:#666;font-weight:normal;">-</div>
<div class="t" style="left:1080px;top:455.92px;font-size:12.5px;color:#666;font-weight:normal;">-</div>
<svg class="a" style="left:781px;top:454.0px;" width="11" height="12" viewBox="0 0 11 12"><g transform="translate(5 5.6) rotate(35)" fill="none" stroke="#555" stroke-width="0.9" stroke-linejoin="round"><path d="M-1.3 -5.2 H1.3 V3.2 L0 5.6 L-1.3 3.2 Z M-1.3 -3.4 H1.3"/></g><path d="M5.8 10.4 H10.2" stroke="#8a8a8a" stroke-width="0.9"/></svg>
<div class="t" style="left:933px;top:455.72px;font-size:12.5px;color:#666;font-weight:normal;letter-spacing:0.45px">12:49:59 04/03/25</div>
<div class="a" style="left:1195.2px;top:448.0px;width:62.60px;height:27.00px;background:#cfe5fb;border:1px solid #acd2f7;border-radius:6px"></div>
<svg class="a" style="left:1203.6px;top:456.6px;" width="10" height="10" viewBox="0 0 10 10"><circle cx="5" cy="5" r="4.8" fill="#4a92e4"/><circle cx="5" cy="5" r="2.1" fill="#cfe5fb"/><circle cx="5" cy="5" r="1.3" fill="#4a92e4"/><path d="M5 2.9 H9.6 M3.2 6 L0.9 2 M6.8 6 L4.5 9.8" stroke="#cfe5fb" stroke-width="0.9"/></svg>
<div class="t" style="left:1220.6px;top:455.27px;font-size:12.2px;color:#4a96e8;font-weight:normal;">Open</div>
<div class="a" style="left:1267.2px;top:456.40000000000003px;width:1.80px;height:1.80px;background:#4a90e2;border-radius:50%"></div>
<div class="a" style="left:1267.2px;top:460.6px;width:1.80px;height:1.80px;background:#4a90e2;border-radius:50%"></div>
<div class="a" style="left:1267.2px;top:464.90000000000003px;width:1.80px;height:1.80px;background:#4a90e2;border-radius:50%"></div>
<div class="a" style="left:102.7px;top:536.5px;width:1185.30px;height:1.00px;background:#ebedf0"></div>
<div class="a" style="left:110px;top:507.1px;width:12.00px;height:12.00px;background:#fff;border:1px solid #d6d8dd;border-radius:2.5px"></div>
<div class="t" style="left:-40.19999999999999px;width:400px;text-align:center;top:506.72px;font-size:12.5px;color:#666;font-weight:normal;">5</div>
<div class="a" style="left:194px;top:502.2px;width:19.60px;height:19.50px;background:#fff;border:1px solid #b9d5f2;border-radius:5px"></div>
<svg class="a" style="left:199.2px;top:507.8px;" width="9" height="9" viewBox="0 0 9 9"><g fill="#4197f0"><rect x="0" y="0" width="4.2" height="4.2"/><rect x="4.8" y="0" width="4.2" height="4.2"/><rect x="0" y="4.8" width="4.2" height="4.2"/><rect x="4.8" y="4.8" width="4.2" height="4.2"/></g></svg>
<div class="a" style="left:205.6px;top:495.9px;width:18.20px;height:10.00px;background:#d6203a;border-radius:5px"></div>
<div class="t" style="left:14.699999999999989px;width:400px;text-align:center;top:496.93px;font-size:8px;color:#fff;font-weight:bold;letter-spacing:-0.2px">131</div>
<div class="t" style="left:216.8px;top:506.72px;font-size:12.5px;color:#646464;font-weight:normal;letter-spacing:0.27px">Well&#8202;-&#8202;off&#8202;-&#8202;...</div>
<div class="a" style="left:303.4px;top:498.2px;width:19.20px;height:19.40px;background:#fff;border:1.2px solid #bcd7f4;border-radius:6px"></div>
<svg class="a" style="left:306px;top:499.9px;" width="15" height="15.2" viewBox="0 0 15 15.2"><rect width="15" height="15.2" rx="3.5" fill="#1b72da"/><path d="M10.4 15.2 V9.3 H12.3 L12.6 7.1 H10.4 V5.8 C10.4 5.1 10.7 4.6 11.7 4.6 H12.7 V2.7 C12.4 2.65 11.8 2.6 11.1 2.6 C9.4 2.6 8.2 3.6 8.2 5.5 V7.1 H6.3 V9.3 H8.2 V15.2 Z" fill="#fff"/></svg>
<div class="a" style="left:326.5px;top:498.2px;width:19.40px;height:19.40px;background:#fff;border:1.2px solid #bcd7f4;border-radius:6px"></div>
<svg class="a" style="left:328.6px;top:500.0px;" width="15.2" height="15.2" viewBox="0 0 15.2 15.2"><defs><linearGradient id="ig4" x1="0" y1="1" x2="1" y2="0"><stop offset="0" stop-color="#fbc64e"/><stop offset="0.5" stop-color="#f05a5a"/><stop offset="1" stop-color="#b845c0"/></linearGradient></defs><rect x="0.8" y="0.8" width="13.6" height="13.6" rx="3.8" fill="#fff6f6" stroke="url(#ig4)" stroke-width="1.5"/><circle cx="7.6" cy="7.6" r="3" fill="none" stroke="url(#ig4)" stroke-width="1.5"/></svg>
<svg class="a" style="left:349px;top:501.1px;" width="13.2" height="13.2" viewBox="0 0 13.2 13.2"><circle cx="6.6" cy="6.6" r="6" fill="none" stroke="#6a9ae6" stroke-width="1"/><path d="M6.6 3.7 V9.5 M3.7 6.6 H9.5" stroke="#6a9ae6" stroke-width="1.1"/></svg>
<div class="a" style="left:311.1px;top:521.4px;width:4.60px;height:4.60px;background:#6b7078;border-radius:50%"></div>
<div class="a" style="left:333.8px;top:521.4px;width:4.60px;height:4.60px;background:#6b7078;border-radius:50%"></div>
<div class="t" style="left:410px;top:506.42px;font-size:12.5px;color:#666;font-weight:normal;">-</div>
<div class="t" style="left:537px;top:506.42px;font-size:12.5px;color:#666;font-weight:normal;">-</div>
<div class="t" style="left:681px;top:506.42px;font-size:12.5px;color:#666;font-weight:normal;">-</div>
<div class="t" style="left:1080px;top:506.42px;font-size:12.5px;color:#666;font-weight:normal;">-</div>
<svg class="a" style="left:781px;top:504.5px;" width="11" height="12" viewBox="0 0 11 12"><g transform="translate(5 5.6) rotate(35)" fill="none" stroke="#555" stroke-width="0.9" stroke-linejoin="round"><path d="M-1.3 -5.2 H1.3 V3.2 L0 5.6 L-1.3 3.2 Z M-1.3 -3.4 H1.3"/></g><path d="M5.8 10.4 H10.2" stroke="#8a8a8a" stroke-width="0.9"/></svg>
<div class="t" style="left:933px;top:506.22px;font-size:12.5px;color:#666;font-weight:normal;letter-spacing:0.45px">12:49:59 04/03/25</div>
<div class="a" style="left:1195.2px;top:498.5px;width:62.60px;height:27.00px;background:#cfe5fb;border:1px solid #acd2f7;border-radius:6px"></div>
<svg class="a" style="left:1203.6px;top:507.1px;" width="10" height="10" viewBox="0 0 10 10"><circle cx="5" cy="5" r="4.8" fill="#4a92e4"/><circle cx="5" cy="5" r="2.1" fill="#cfe5fb"/><circle cx="5" cy="5" r="1.3" fill="#4a92e4"/><path d="M5 2.9 H9.6 M3.2 6 L0.9 2 M6.8 6 L4.5 9.8" stroke="#cfe5fb" stroke-width="0.9"/></svg>
<div class="t" style="left:1220.6px;top:505.77px;font-size:12.2px;color:#4a96e8;font-weight:normal;">Open</div>
<div class="a" style="left:1267.2px;top:506.90000000000003px;width:1.80px;height:1.80px;background:#4a90e2;border-radius:50%"></div>
<div class="a" style="left:1267.2px;top:511.1px;width:1.80px;height:1.80px;background:#4a90e2;border-radius:50%"></div>
<div class="a" style="left:1267.2px;top:515.4px;width:1.80px;height:1.80px;background:#4a90e2;border-radius:50%"></div>
<div class="a" style="left:102.7px;top:587.0px;width:1185.30px;height:1.00px;background:#ebedf0"></div>
<div class="a" style="left:110px;top:557.6px;width:12.00px;height:12.00px;background:#fff;border:1px solid #d6d8dd;border-radius:2.5px"></div>
<div class="t" style="left:-40.19999999999999px;width:400px;text-align:center;top:557.22px;font-size:12.5px;color:#666;font-weight:normal;">6</div>
<div class="a" style="left:194px;top:552.7px;width:19.60px;height:19.50px;background:#fff;border:1px solid #b9d5f2;border-radius:5px"></div>
<svg class="a" style="left:199.2px;top:558.3px;" width="9" height="9" viewBox="0 0 9 9"><g fill="#4197f0"><rect x="0" y="0" width="4.2" height="4.2"/><rect x="4.8" y="0" width="4.2" height="4.2"/><rect x="0" y="4.8" width="4.2" height="4.2"/><rect x="4.8" y="4.8" width="4.2" height="4.2"/></g></svg>
<div class="a" style="left:205.6px;top:546.4px;width:18.20px;height:10.00px;background:#d6203a;border-radius:5px"></div>
<div class="t" style="left:14.699999999999989px;width:400px;text-align:center;top:547.43px;font-size:8px;color:#fff;font-weight:bold;letter-spacing:-0.2px">131</div>
<div class="t" style="left:216.8px;top:557.22px;font-size:12.5px;color:#646464;font-weight:normal;letter-spacing:0.14px">Stimulatin...</div>
<div class="a" style="left:303.4px;top:548.7px;width:19.20px;height:19.40px;background:#fff;border:1.2px solid #bcd7f4;border-radius:6px"></div>
<svg class="a" style="left:306px;top:550.4px;" width="15" height="15.2" viewBox="0 0 15 15.2"><rect width="15" height="15.2" rx="3.5" fill="#1b72da"/><path d="M10.4 15.2 V9.3 H12.3 L12.6 7.1 H10.4 V5.8 C10.4 5.1 10.7 4.6 11.7 4.6 H12.7 V2.7 C12.4 2.65 11.8 2.6 11.1 2.6 C9.4 2.6 8.2 3.6 8.2 5.5 V7.1 H6.3 V9.3 H8.2 V15.2 Z" fill="#fff"/></svg>
<div class="a" style="left:326.5px;top:548.7px;width:19.40px;height:19.40px;background:#fff;border:1.2px solid #bcd7f4;border-radius:6px"></div>
<svg class="a" style="left:328.6px;top:550.5px;" width="15.2" height="15.2" viewBox="0 0 15.2 15.2"><defs><linearGradient id="ig5" x1="0" y1="1" x2="1" y2="0"><stop offset="0" stop-color="#fbc64e"/><stop offset="0.5" stop-color="#f05a5a"/><stop offset="1" stop-color="#b845c0"/></linearGradient></defs><rect x="0.8" y="0.8" width="13.6" height="13.6" rx="3.8" fill="#fff6f6" stroke="url(#ig5)" stroke-width="1.5"/><circle cx="7.6" cy="7.6" r="3" fill="none" stroke="url(#ig5)" stroke-width="1.5"/></svg>
<svg class="a" style="left:349px;top:551.6px;" width="13.2" height="13.2" viewBox="0 0 13.2 13.2"><circle cx="6.6" cy="6.6" r="6" fill="none" stroke="#6a9ae6" stroke-width="1"/><path d="M6.6 3.7 V9.5 M3.7 6.6 H9.5" stroke="#6a9ae6" stroke-width="1.1"/></svg>
<div class="a" style="left:311.1px;top:571.9px;width:4.60px;height:4.60px;background:#6b7078;border-radius:50%"></div>
<div class="a" style="left:333.8px;top:571.9px;width:4.60px;height:4.60px;background:#6b7078;border-radius:50%"></div>
<div class="t" style="left:410px;top:556.92px;font-size:12.5px;color:#666;font-weight:normal;">-</div>
<div class="t" style="left:537px;top:556.92px;font-size:12.5px;color:#666;font-weight:normal;">-</div>
<div class="t" style="left:681px;top:556.92px;font-size:12.5px;color:#666;font-weight:normal;">-</div>
<div class="t" style="left:1080px;top:556.92px;font-size:12.5px;color:#666;font-weight:normal;">-</div>
<svg class="a" style="left:781px;top:555.0px;" width="11" height="12" viewBox="0 0 11 12"><g transform="translate(5 5.6) rotate(35)" fill="none" stroke="#555" stroke-width="0.9" stroke-linejoin="round"><path d="M-1.3 -5.2 H1.3 V3.2 L0 5.6 L-1.3 3.2 Z M-1.3 -3.4 H1.3"/></g><path d="M5.8 10.4 H10.2" stroke="#8a8a8a" stroke-width="0.9"/></svg>
<div class="t" style="left:933px;top:556.72px;font-size:12.5px;color:#666;font-weight:normal;letter-spacing:0.45px">12:49:59 04/03/25</div>
<div class="a" style="left:1195.2px;top:549.0px;width:62.60px;height:27.00px;background:#cfe5fb;border:1px solid #acd2f7;border-radius:6px"></div>
<svg class="a" style="left:1203.6px;top:557.6px;" width="10" height="10" viewBox="0 0 10 10"><circle cx="5" cy="5" r="4.8" fill="#4a92e4"/><circle cx="5" cy="5" r="2.1" fill="#cfe5fb"/><circle cx="5" cy="5" r="1.3" fill="#4a92e4"/><path d="M5 2.9 H9.6 M3.2 6 L0.9 2 M6.8 6 L4.5 9.8" stroke="#cfe5fb" stroke-width="0.9"/></svg>
<div class="t" style="left:1220.6px;top:556.27px;font-size:12.2px;color:#4a96e8;font-weight:normal;">Open</div>
<div class="a" style="left:1267.2px;top:557.4px;width:1.80px;height:1.80px;background:#4a90e2;border-radius:50%"></div>
<div class="a" style="left:1267.2px;top:561.6px;width:1.80px;height:1.80px;background:#4a90e2;border-radius:50%"></div>
<div class="a" style="left:1267.2px;top:565.9px;width:1.80px;height:1.80px;background:#4a90e2;border-radius:50%"></div>
<div class="a" style="left:102.7px;top:637.5px;width:1185.30px;height:1.00px;background:#ebedf0"></div>
<div class="a" style="left:110px;top:608.1px;width:12.00px;height:12.00px;background:#fff;border:1px solid #d6d8dd;border-radius:2.5px"></div>
<div class="t" style="left:-40.19999999999999px;width:400px;text-align:center;top:607.72px;font-size:12.5px;color:#666;font-weight:normal;">7</div>
<div class="a" style="left:194px;top:603.2px;width:19.60px;height:19.50px;background:#fff;border:1px solid #b9d5f2;border-radius:5px"></div>
<svg class="a" style="left:199.2px;top:608.8px;" width="9" height="9" viewBox="0 0 9 9"><g fill="#4197f0"><rect x="0" y="0" width="4.2" height="4.2"/><rect x="4.8" y="0" width="4.2" height="4.2"/><rect x="0" y="4.8" width="4.2" height="4.2"/><rect x="4.8" y="4.8" width="4.2" height="4.2"/></g></svg>
<div class="a" style="left:205.6px;top:596.9px;width:18.20px;height:10.00px;background:#d6203a;border-radius:5px"></div>
<div class="t" style="left:14.699999999999989px;width:400px;text-align:center;top:597.93px;font-size:8px;color:#fff;font-weight:bold;letter-spacing:-0.2px">131</div>
<div class="t" style="left:216.8px;top:607.72px;font-size:12.5px;color:#646464;font-weight:normal;letter-spacing:0.22px">Drafty&#8202;-&#8202;Ca...</div>
<div class="a" style="left:303.4px;top:599.2px;width:19.20px;height:19.40px;background:#fff;border:1.2px solid #bcd7f4;border-radius:6px"></div>
<svg class="a" style="left:306px;top:600.9px;" width="15" height="15.2" viewBox="0 0 15 15.2"><rect width="15" height="15.2" rx="3.5" fill="#1b72da"/><path d="M10.4 15.2 V9.3 H12.3 L12.6 7.1 H10.4 V5.8 C10.4 5.1 10.7 4.6 11.7 4.6 H12.7 V2.7 C12.4 2.65 11.8 2.6 11.1 2.6 C9.4 2.6 8.2 3.6 8.2 5.5 V7.1 H6.3 V9.3 H8.2 V15.2 Z" fill="#fff"/></svg>
<div class="a" style="left:326.5px;top:599.2px;width:19.40px;height:19.40px;background:#fff;border:1.2px solid #bcd7f4;border-radius:6px"></div>
<svg class="a" style="left:328.6px;top:601.0px;" width="15.2" height="15.2" viewBox="0 0 15.2 15.2"><defs><linearGradient id="ig6" x1="0" y1="1" x2="1" y2="0"><stop offset="0" stop-color="#fbc64e"/><stop offset="0.5" stop-color="#f05a5a"/><stop offset="1" stop-color="#b845c0"/></linearGradient></defs><rect x="0.8" y="0.8" width="13.6" height="13.6" rx="3.8" fill="#fff6f6" stroke="url(#ig6)" stroke-width="1.5"/><circle cx="7.6" cy="7.6" r="3" fill="none" stroke="url(#ig6)" stroke-width="1.5"/></svg>
<svg class="a" style="left:349px;top:602.1px;" width="13.2" height="13.2" viewBox="0 0 13.2 13.2"><circle cx="6.6" cy="6.6" r="6" fill="none" stroke="#6a9ae6" stroke-width="1"/><path d="M6.6 3.7 V9.5 M3.7 6.6 H9.5" stroke="#6a9ae6" stroke-width="1.1"/></svg>
<div class="a" style="left:311.1px;top:622.4px;width:4.60px;height:4.60px;background:#6b7078;border-radius:50%"></div>
<div class="a" style="left:333.8px;top:622.4px;width:4.60px;height:4.60px;background:#6b7078;border-radius:50%"></div>
<div class="t" style="left:410px;top:607.42px;font-size:12.5px;color:#666;font-weight:normal;">-</div>
<div class="t" style="left:537px;top:607.42px;font-size:12.5px;color:#666;font-weight:normal;">-</div>
<div class="t" style="left:681px;top:607.42px;font-size:12.5px;color:#666;font-weight:normal;">-</div>
<div class="t" style="left:1080px;top:607.42px;font-size:12.5px;color:#666;font-weight:normal;">-</div>
<svg class="a" style="left:781px;top:605.5px;" width="11" height="12" viewBox="0 0 11 12"><g transform="translate(5 5.6) rotate(35)" fill="none" stroke="#555" stroke-width="0.9" stroke-linejoin="round"><path d="M-1.3 -5.2 H1.3 V3.2 L0 5.6 L-1.3 3.2 Z M-1.3 -3.4 H1.3"/></g><path d="M5.8 10.4 H10.2" stroke="#8a8a8a" stroke-width="0.9"/></svg>
<div class="t" style="left:933px;top:607.22px;font-size:12.5px;color:#666;font-weight:normal;letter-spacing:0.45px">12:49:59 04/03/25</div>
<div class="a" style="left:1195.2px;top:599.5px;width:62.60px;height:27.00px;background:#cfe5fb;border:1px solid #acd2f7;border-radius:6px"></div>
<svg class="a" style="left:1203.6px;top:608.1px;" width="10" height="10" viewBox="0 0 10 10"><circle cx="5" cy="5" r="4.8" fill="#4a92e4"/><circle cx="5" cy="5" r="2.1" fill="#cfe5fb"/><circle cx="5" cy="5" r="1.3" fill="#4a92e4"/><path d="M5 2.9 H9.6 M3.2 6 L0.9 2 M6.8 6 L4.5 9.8" stroke="#cfe5fb" stroke-width="0.9"/></svg>
<div class="t" style="left:1220.6px;top:606.77px;font-size:12.2px;color:#4a96e8;font-weight:normal;">Open</div>
<div class="a" style="left:1267.2px;top:607.9px;width:1.80px;height:1.80px;background:#4a90e2;border-radius:50%"></div>
<div class="a" style="left:1267.2px;top:612.1px;width:1.80px;height:1.80px;background:#4a90e2;border-radius:50%"></div>
<div class="a" style="left:1267.2px;top:616.4px;width:1.80px;height:1.80px;background:#4a90e2;border-radius:50%"></div>
<div class="a" style="left:102.7px;top:688.0px;width:1185.30px;height:1.00px;background:#ebedf0"></div>
<div class="a" style="left:110px;top:658.6px;width:12.00px;height:12.00px;background:#fff;border:1px solid #d6d8dd;border-radius:2.5px"></div>
<div class="t" style="left:-40.19999999999999px;width:400px;text-align:center;top:658.22px;font-size:12.5px;color:#666;font-weight:normal;">8</div>
<div class="a" style="left:194px;top:653.7px;width:19.60px;height:19.50px;background:#fff;border:1px solid #b9d5f2;border-radius:5px"></div>
<svg class="a" style="left:199.2px;top:659.3px;" width="9" height="9" viewBox="0 0 9 9"><g fill="#4197f0"><rect x="0" y="0" width="4.2" height="4.2"/><rect x="4.8" y="0" width="4.2" height="4.2"/><rect x="0" y="4.8" width="4.2" height="4.2"/><rect x="4.8" y="4.8" width="4.2" height="4.2"/></g></svg>
<div class="a" style="left:205.6px;top:647.4px;width:18.20px;height:10.00px;background:#d6203a;border-radius:5px"></div>
<div class="t" style="left:14.699999999999989px;width:400px;text-align:center;top:648.43px;font-size:8px;color:#fff;font-weight:bold;letter-spacing:-0.2px">131</div>
<div class="t" style="left:216.8px;top:658.22px;font-size:12.5px;color:#646464;font-weight:normal;letter-spacing:0.22px">Hasty&#8202;-&#8202;We...</div>
<div class="a" style="left:303.4px;top:649.7px;width:19.20px;height:19.40px;background:#fff;border:1.2px solid #bcd7f4;border-radius:6px"></div>
<svg class="a" style="left:306px;top:651.4px;" width="15" height="15.2" viewBox="0 0 15 15.2"><rect width="15" height="15.2" rx="3.5" fill="#1b72da"/><path d="M10.4 15.2 V9.3 H12.3 L12.6 7.1 H10.4 V5.8 C10.4 5.1 10.7 4.6 11.7 4.6 H12.7 V2.7 C12.4 2.65 11.8 2.6 11.1 2.6 C9.4 2.6 8.2 3.6 8.2 5.5 V7.1 H6.3 V9.3 H8.2 V15.2 Z" fill="#fff"/></svg>
<div class="a" style="left:326.5px;top:649.7px;width:19.40px;height:19.40px;background:#fff;border:1.2px solid #bcd7f4;border-radius:6px"></div>
<svg class="a" style="left:328.6px;top:651.5px;" width="15.2" height="15.2" viewBox="0 0 15.2 15.2"><defs><linearGradient id="ig7" x1="0" y1="1" x2="1" y2="0"><stop offset="0" stop-color="#fbc64e"/><stop offset="0.5" stop-color="#f05a5a"/><stop offset="1" stop-color="#b845c0"/></linearGradient></defs><rect x="0.8" y="0.8" width="13.6" height="13.6" rx="3.8" fill="#fff6f6" stroke="url(#ig7)" stroke-width="1.5"/><circle cx="7.6" cy="7.6" r="3" fill="none" stroke="url(#ig7)" stroke-width="1.5"/></svg>
<svg class="a" style="left:349px;top:652.6px;" width="13.2" height="13.2" viewBox="0 0 13.2 13.2"><circle cx="6.6" cy="6.6" r="6" fill="none" stroke="#6a9ae6" stroke-width="1"/><path d="M6.6 3.7 V9.5 M3.7 6.6 H9.5" stroke="#6a9ae6" stroke-width="1.1"/></svg>
<div class="a" style="left:311.1px;top:672.9px;width:4.60px;height:4.60px;background:#6b7078;border-radius:50%"></div>
<div class="a" style="left:333.8px;top:672.9px;width:4.60px;height:4.60px;background:#6b7078;border-radius:50%"></div>
<div class="t" style="left:410px;top:657.92px;font-size:12.5px;color:#666;font-weight:normal;">-</div>
<div class="t" style="left:537px;top:657.92px;font-size:12.5px;color:#666;font-weight:normal;">-</div>
<div class="t" style="left:681px;top:657.92px;font-size:12.5px;color:#666;font-weight:normal;">-</div>
<div class="t" style="left:1080px;top:657.92px;font-size:12.5px;color:#666;font-weight:normal;">-</div>
<svg class="a" style="left:781px;top:656.0px;" width="11" height="12" viewBox="0 0 11 12"><g transform="translate(5 5.6) rotate(35)" fill="none" stroke="#555" stroke-width="0.9" stroke-linejoin="round"><path d="M-1.3 -5.2 H1.3 V3.2 L0 5.6 L-1.3 3.2 Z M-1.3 -3.4 H1.3"/></g><path d="M5.8 10.4 H10.2" stroke="#8a8a8a" stroke-width="0.9"/></svg>
<div class="t" style="left:933px;top:657.72px;font-size:12.5px;color:#666;font-weight:normal;letter-spacing:0.45px">12:49:59 04/03/25</div>
<div class="a" style="left:1195.2px;top:650.0px;width:62.60px;height:27.00px;background:#cfe5fb;border:1px solid #acd2f7;border-radius:6px"></div>
<svg class="a" style="left:1203.6px;top:658.6px;" width="10" height="10" viewBox="0 0 10 10"><circle cx="5" cy="5" r="4.8" fill="#4a92e4"/><circle cx="5" cy="5" r="2.1" fill="#cfe5fb"/><circle cx="5" cy="5" r="1.3" fill="#4a92e4"/><path d="M5 2.9 H9.6 M3.2 6 L0.9 2 M6.8 6 L4.5 9.8" stroke="#cfe5fb" stroke-width="0.9"/></svg>
<div class="t" style="left:1220.6px;top:657.27px;font-size:12.2px;color:#4a96e8;font-weight:normal;">Open</div>
<div class="a" style="left:1267.2px;top:658.4px;width:1.80px;height:1.80px;background:#4a90e2;border-radius:50%"></div>
<div class="a" style="left:1267.2px;top:662.6px;width:1.80px;height:1.80px;background:#4a90e2;border-radius:50%"></div>
<div class="a" style="left:1267.2px;top:666.9px;width:1.80px;height:1.80px;background:#4a90e2;border-radius:50%"></div>
<div class="a" style="left:110px;top:709.1px;width:12.00px;height:12.00px;background:#fff;border:1px solid #d6d8dd;border-radius:2.5px"></div>
<div class="t" style="left:-40.19999999999999px;width:400px;text-align:center;top:708.72px;font-size:12.5px;color:#666;font-weight:normal;">9</div>
<div class="a" style="left:194px;top:704.2px;width:19.60px;height:19.50px;background:#fff;border:1px solid #b9d5f2;border-radius:5px"></div>
<svg class="a" style="left:199.2px;top:709.8px;" width="9" height="9" viewBox="0 0 9 9"><g fill="#4197f0"><rect x="0" y="0" width="4.2" height="4.2"/><rect x="4.8" y="0" width="4.2" height="4.2"/><rect x="0" y="4.8" width="4.2" height="4.2"/><rect x="4.8" y="4.8" width="4.2" height="4.2"/></g></svg>
<div class="a" style="left:205.6px;top:697.9px;width:18.20px;height:10.00px;background:#d6203a;border-radius:5px"></div>
<div class="t" style="left:14.699999999999989px;width:400px;text-align:center;top:698.93px;font-size:8px;color:#fff;font-weight:bold;letter-spacing:-0.2px">131</div>
<div class="t" style="left:216.8px;top:708.72px;font-size:12.5px;color:#646464;font-weight:normal;letter-spacing:0px"></div>
<div class="a" style="left:303.4px;top:700.2px;width:19.20px;height:19.40px;background:#fff;border:1.2px solid #bcd7f4;border-radius:6px"></div>
<svg class="a" style="left:306px;top:701.9px;" width="15" height="15.2" viewBox="0 0 15 15.2"><rect width="15" height="15.2" rx="3.5" fill="#1b72da"/><path d="M10.4 15.2 V9.3 H12.3 L12.6 7.1 H10.4 V5.8 C10.4 5.1 10.7 4.6 11.7 4.6 H12.7 V2.7 C12.4 2.65 11.8 2.6 11.1 2.6 C9.4 2.6 8.2 3.6 8.2 5.5 V7.1 H6.3 V9.3 H8.2 V15.2 Z" fill="#fff"/></svg>
<div class="a" style="left:326.5px;top:700.2px;width:19.40px;height:19.40px;background:#fff;border:1.2px solid #bcd7f4;border-radius:6px"></div>
<svg class="a" style="left:328.6px;top:702.0px;" width="15.2" height="15.2" viewBox="0 0 15.2 15.2"><defs><linearGradient id="ig8" x1="0" y1="1" x2="1" y2="0"><stop offset="0" stop-color="#fbc64e"/><stop offset="0.5" stop-color="#f05a5a"/><stop offset="1" stop-color="#b845c0"/></linearGradient></defs><rect x="0.8" y="0.8" width="13.6" height="13.6" rx="3.8" fill="#fff6f6" stroke="url(#ig8)" stroke-width="1.5"/><circle cx="7.6" cy="7.6" r="3" fill="none" stroke="url(#ig8)" stroke-width="1.5"/></svg>
<svg class="a" style="left:349px;top:703.1px;" width="13.2" height="13.2" viewBox="0 0 13.2 13.2"><circle cx="6.6" cy="6.6" r="6" fill="none" stroke="#6a9ae6" stroke-width="1"/><path d="M6.6 3.7 V9.5 M3.7 6.6 H9.5" stroke="#6a9ae6" stroke-width="1.1"/></svg>
<div class="a" style="left:311.1px;top:723.4px;width:4.60px;height:4.60px;background:#6b7078;border-radius:50%"></div>
<div class="a" style="left:333.8px;top:723.4px;width:4.60px;height:4.60px;background:#6b7078;border-radius:50%"></div>
<div class="t" style="left:410px;top:708.42px;font-size:12.5px;color:#666;font-weight:normal;">-</div>
<div class="t" style="left:537px;top:708.42px;font-size:12.5px;color:#666;font-weight:normal;">-</div>
<div class="t" style="left:681px;top:708.42px;font-size:12.5px;color:#666;font-weight:normal;">-</div>
<div class="t" style="left:1080px;top:708.42px;font-size:12.5px;color:#666;font-weight:normal;">-</div>
<svg class="a" style="left:781px;top:706.5px;" width="11" height="12" viewBox="0 0 11 12"><g transform="translate(5 5.6) rotate(35)" fill="none" stroke="#555" stroke-width="0.9" stroke-linejoin="round"><path d="M-1.3 -5.2 H1.3 V3.2 L0 5.6 L-1.3 3.2 Z M-1.3 -3.4 H1.3"/></g><path d="M5.8 10.4 H10.2" stroke="#8a8a8a" stroke-width="0.9"/></svg>
<div class="t" style="left:933px;top:708.22px;font-size:12.5px;color:#666;font-weight:normal;letter-spacing:0.45px">12:49:59 04/03/25</div>
<div class="a" style="left:1195.2px;top:700.5px;width:62.60px;height:27.00px;background:#cfe5fb;border:1px solid #acd2f7;border-radius:6px"></div>
<svg class="a" style="left:1203.6px;top:709.1px;" width="10" height="10" viewBox="0 0 10 10"><circle cx="5" cy="5" r="4.8" fill="#4a92e4"/><circle cx="5" cy="5" r="2.1" fill="#cfe5fb"/><circle cx="5" cy="5" r="1.3" fill="#4a92e4"/><path d="M5 2.9 H9.6 M3.2 6 L0.9 2 M6.8 6 L4.5 9.8" stroke="#cfe5fb" stroke-width="0.9"/></svg>
<div class="t" style="left:1220.6px;top:707.77px;font-size:12.2px;color:#4a96e8;font-weight:normal;">Open</div>
<div class="a" style="left:1267.2px;top:708.9px;width:1.80px;height:1.80px;background:#4a90e2;border-radius:50%"></div>
<div class="a" style="left:1267.2px;top:713.1px;width:1.80px;height:1.80px;background:#4a90e2;border-radius:50%"></div>
<div class="a" style="left:1267.2px;top:717.4px;width:1.80px;height:1.80px;background:#4a90e2;border-radius:50%"></div>
</div>
<div class="a" style="left:1284px;top:284.5px;width:5.00px;height:198.50px;background:#c3c5c7;border-radius:2.5px"></div>
<div class="a" style="left:103px;top:709.5px;width:966.00px;height:3.00px;background:#bdbdbd;border-radius:1.5px"></div>
<div class="a" style="left:1069px;top:709.5px;width:223.00px;height:3.50px;background:#f0ecf6"></div>
<div class="a" style="left:93px;top:712.5px;width:1199.00px;height:0.50px;background:#efebf7"></div>
<svg class="a" style="left:61px;top:82.4px;" width="17.5" height="17.5" viewBox="0 0 17.5 17.5"><defs><linearGradient id="lg" x1="0" y1="1" x2="1" y2="0"><stop offset="0" stop-color="#0f3598"/><stop offset="1" stop-color="#2a58e0"/></linearGradient></defs><rect width="17.5" height="17.5" rx="1.5" fill="url(#lg)"/><path d="M11.9 6.3 A4.2 4.2 0 1 0 11.7 11.4" fill="none" stroke="#fff" stroke-width="3.9"/></svg>
<div class="a" style="left:56px;top:115px;width:27.00px;height:27.00px;background:#e9edf5;border-radius:7px"></div>
<svg class="a" style="left:63px;top:121.8px;" width="15" height="14" viewBox="0 0 15 14"><rect x="3" y="3.3" width="10.8" height="9" rx="1" fill="none" stroke="#4f9cf0" stroke-width="1.2"/><rect x="0.3" y="0.3" width="10" height="6.2" rx="1" fill="#3d8ff0"/><path d="M3.6 2.2 L2.6 3.4 L3.6 4.6 M6.9 2.2 L7.9 3.4 L6.9 4.6" fill="none" stroke="#fff" stroke-width="0.8"/></svg>
<svg class="a" style="left:62px;top:155px;" width="16" height="17" viewBox="0 0 16 17"><rect x="2.5" y="1.9" width="8.2" height="5.6" rx="1.2" fill="none" stroke="#2b2b2b" stroke-width="1.1"/><circle cx="6.6" cy="1.6" r="0.6" fill="#2b2b2b"/><circle cx="5.2" cy="5.2" r="0.75" fill="#2b2b2b"/><circle cx="8.2" cy="5.2" r="0.75" fill="#2b2b2b"/><path d="M3.3 8.9 H8.6" stroke="#777" stroke-width="1"/><path d="M8.2 10.2 H3.9 C1.4 10.2 1.3 14.9 4.1 14.9 H9.8" fill="none" stroke="#2b2b2b" stroke-width="1.1"/><path d="M10.8 7.4 Q11.3 9.8 13.7 10.3 Q11.3 10.8 10.8 13.2 Q10.3 10.8 7.9 10.3 Q10.3 9.8 10.8 7.4 Z" fill="#2b2b2b"/><path d="M13.3 12.5 Q13.6 14 15.1 14.3 Q13.6 14.6 13.3 16.1 Q13 14.6 11.5 14.3 Q13 14 13.3 12.5 Z" fill="#2b2b2b"/></svg>
<svg class="a" style="left:62.8px;top:190.8px;" width="14" height="12" viewBox="0 0 14 12"><rect x="0.6" y="0.6" width="12.8" height="10.8" rx="0.8" fill="none" stroke="#2b2b2b" stroke-width="1.2"/><path d="M4.2 3.6 Q7 6.6 9.8 3.6" fill="none" stroke="#2b2b2b" stroke-width="1.2"/></svg>
<svg class="a" style="left:63px;top:225px;" width="14" height="14.5" viewBox="0 0 14 14.5"><path d="M7 0.7 L12.9 3.8 V10.6 L7 13.8 L1.1 10.6 V3.8 Z M1.1 3.8 L7 7 L12.9 3.8 M7 7 V13.8 M4 2.3 L9.9 5.4" fill="none" stroke="#2b2b2b" stroke-width="1.2" stroke-linejoin="round"/></svg>
<svg class="a" style="left:62.5px;top:259.5px;" width="15" height="15" viewBox="0 0 15 15"><path d="M5.2 3 C5.2 0.4 8.8 0.4 8.8 3 H11.6 V6 C14.2 6 14.2 9.6 11.6 9.6 V13.6 H8 C8 11 4.4 11 4.4 13.6 H1.2 V9.8 C3.8 9.8 3.8 6.2 1.2 6.2 V3 Z" fill="none" stroke="#2b2b2b" stroke-width="1.2" stroke-linejoin="round"/></svg>
<svg class="a" style="left:62.5px;top:294px;" width="16" height="15" viewBox="0 0 16 15"><path d="M6.3 1.6 A6 6 0 1 0 13.6 8" fill="none" stroke="#2b2b2b" stroke-width="1.3" stroke-linecap="round"/><path d="M5.6 8.6 L11.8 2.6" stroke="#2b2b2b" stroke-width="2.3" stroke-linecap="round"/><path d="M11.3 1.6 L12.8 0.9 L13.5 1.6 L12.8 3.1 Z" fill="#2b2b2b"/></svg>
<svg class="a" style="left:63px;top:328.8px;" width="14" height="14.5" viewBox="0 0 14 14.5"><ellipse cx="7" cy="3.3" rx="6" ry="2.5" fill="none" stroke="#2b2b2b" stroke-width="1.2"/><path d="M1 3.3 V11 C1 14.3 13 14.3 13 11 V3.3 M1 7.2 C1 10.4 13 10.4 13 7.2" fill="none" stroke="#2b2b2b" stroke-width="1.2"/></svg>
<div class="t" style="left:62.3px;top:366px;width:15px;height:9px;font-size:8.3px;line-height:9px;font-weight:bold;color:#2b2b2b;font-family:'Liberation Mono',monospace;transform:scaleY(1.25);transform-origin:50% 50%;text-align:center;letter-spacing:-0.1px">LOG</div>
<div class="t" style="left:62.8px;top:401px;width:15px;height:9px;font-size:8.3px;line-height:9px;font-weight:bold;color:#2b2b2b;font-family:'Liberation Mono',monospace;transform:scaleY(1.25);transform-origin:50% 50%;text-align:center;letter-spacing:-0.1px">API</div>
<svg class="a" style="left:62.8px;top:433.5px;" width="14.5" height="15" viewBox="0 0 14.5 15"><path d="M7.25 1 L9 2.3 L11.1 2.2 L11.7 4.3 L13.5 5.4 L12.9 7.5 L13.5 9.6 L11.7 10.7 L11.1 12.8 L9 12.7 L7.25 14 L5.5 12.7 L3.4 12.8 L2.8 10.7 L1 9.6 L1.6 7.5 L1 5.4 L2.8 4.3 L3.4 2.2 L5.5 2.3 Z" fill="none" stroke="#2b2b2b" stroke-width="1.1" stroke-linejoin="round"/><circle cx="7.25" cy="7.5" r="2.3" fill="none" stroke="#2b2b2b" stroke-width="1.1"/></svg>
<svg class="a" style="left:63px;top:624.7px;" width="14" height="14" viewBox="0 0 14 14"><circle cx="7" cy="7" r="3.4" fill="none" stroke="#2b2b2b" stroke-width="1.1"/><circle cx="12.80" cy="7.00" r="0.75" fill="#2b2b2b"/><circle cx="11.10" cy="11.10" r="0.75" fill="#2b2b2b"/><circle cx="7.00" cy="12.80" r="0.75" fill="#2b2b2b"/><circle cx="2.90" cy="11.10" r="0.75" fill="#2b2b2b"/><circle cx="1.20" cy="7.00" r="0.75" fill="#2b2b2b"/><circle cx="2.90" cy="2.90" r="0.75" fill="#2b2b2b"/><circle cx="7.00" cy="1.20" r="0.75" fill="#2b2b2b"/><circle cx="11.10" cy="2.90" r="0.75" fill="#2b2b2b"/></svg>
<svg class="a" style="left:63px;top:654.6px;" width="14" height="15" viewBox="0 0 14 15"><defs><clipPath id="fc"><circle cx="7" cy="7.3" r="7"/></clipPath></defs><g clip-path="url(#fc)"><rect width="14" height="15" fill="#fff"/><rect x="0" y="0.30" width="14" height="1.2" fill="#cc2f45"/><rect x="0" y="2.25" width="14" height="1.2" fill="#cc2f45"/><rect x="0" y="4.20" width="14" height="1.2" fill="#cc2f45"/><rect x="0" y="6.15" width="14" height="1.2" fill="#cc2f45"/><rect x="0" y="8.10" width="14" height="1.2" fill="#cc2f45"/><rect x="0" y="10.05" width="14" height="1.2" fill="#cc2f45"/><rect x="0" y="12.00" width="14" height="1.2" fill="#cc2f45"/><rect x="0" y="13.95" width="14" height="1.2" fill="#cc2f45"/><rect x="0" y="0" width="6" height="6.2" fill="#34437e"/></g></svg>
<div class="a" style="left:59.6px;top:681px;width:20.40px;height:1.00px;background:#e6e8ec"></div>
<svg class="a" style="left:59.5px;top:688.4px;" width="20.5" height="20.5" viewBox="0 0 20.5 20.5"><defs><clipPath id="av"><circle cx="10.25" cy="10.25" r="10.25"/></clipPath></defs><g clip-path="url(#av)"><circle cx="10.25" cy="10.25" r="10.25" fill="#3a8ef2"/><path d="M3.5 21 C3.8 16.2 6.5 15.3 10.25 15.2 C14 15.3 16.7 16.2 17 21 Z" fill="#2a6fe0"/><path d="M8.3 15.3 L10.25 17.6 L12.2 15.3 Z" fill="#fff"/><rect x="8.9" y="12.6" width="2.7" height="3" fill="#efc39a"/><ellipse cx="10.25" cy="10.6" rx="3.5" ry="3.9" fill="#f6d1ab"/><path d="M6.4 10 C5.9 5.8 8 4.6 10.4 4.6 C13 4.6 15 6 14.2 10 C13.8 8.2 12.6 7.6 11.8 7.4 C10.6 8.3 8.3 8.2 7.2 8 C6.8 8.6 6.6 9.2 6.4 10 Z" fill="#1b2652"/><circle cx="8.9" cy="10.8" r="0.35" fill="#6b4a30"/><circle cx="11.6" cy="10.8" r="0.35" fill="#6b4a30"/></g></svg>
<div class="a" style="left:81px;top:97.3px;width:21.5px;height:21.5px;border-radius:50%;background:#fff;box-shadow:0 1px 3px rgba(0,0,0,0.10)"></div>
<svg class="a" style="left:89.2px;top:103px;" width="6" height="9.5" viewBox="0 0 6 9.5"><path d="M1 0.8 L5 4.75 L1 8.7" fill="none" stroke="#5a5a5a" stroke-width="1.1"/></svg>
</div></div></div></body></html>
